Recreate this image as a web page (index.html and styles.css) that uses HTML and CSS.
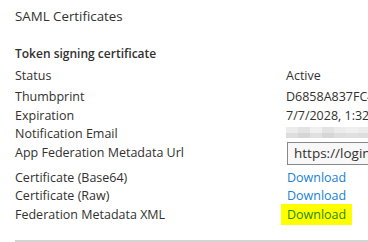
FILE: index.html
```html
<!DOCTYPE html>
<html lang="en">
<head>
    <title>SAML Certificates</title>
    <link rel="stylesheet" href="styles.css">
</head>
<body>
    <section class="panel">
        <h2 class="title">SAML Certificates</h2>
        <h3 class="subtitle">Token signing certificate</h3>
        <div class="props">
            <div class="row first">
                <span class="label">Status</span>
                <span class="value">Active</span>
            </div>
            <div class="row">
                <span class="label">Thumbprint</span>
                <span class="value">D6858A837FC4B21E09A6</span>
            </div>
            <div class="row">
                <span class="label">Expiration</span>
                <span class="value">7/7/2028, 1:32:10 PM</span>
            </div>
            <div class="row">
                <span class="label">Notification Email</span>
                <span class="value"><span class="blur"><i></i><i></i><i></i><i></i><i></i><i></i><i></i></span></span>
            </div>
            <div class="row url-row">
                <span class="label">App Federation Metadata Url</span>
                <span class="value"><span class="url-box">https://login.microsoftonline.com</span></span>
            </div>
            <div class="row">
                <span class="label">Certificate (Base64)</span>
                <span class="value"><a href="#" class="link">Download</a></span>
            </div>
            <div class="row">
                <span class="label">Certificate (Raw)</span>
                <span class="value"><a href="#" class="link">Download</a></span>
            </div>
            <div class="row">
                <span class="label">Federation Metadata XML</span>
                <span class="value"><a href="#" class="link marked">Download</a></span>
            </div>
        </div>
        <hr class="divider">
    </section>
</body>
</html>
```

FILE: styles.css
```css
body, html {
    margin: 0;
    padding: 0;
    width: 368px;
    height: 242px;
    overflow: hidden;
    background: #fff;
}
.panel {
    padding: 7px 0 0 15px;
    font-family: "Open Sans", "Noto Sans", sans-serif;
    font-size: 12.5px;
    color: #323130;
}
.title {
    margin: 0;
    font-size: 13.3px;
    font-weight: 400;
    line-height: 18px;
}
.subtitle {
    margin: 20px 0 0 0;
    font-size: 12px;
    font-weight: 600;
    line-height: 18px;
}
.props {
    display: flex;
    flex-direction: column;
    margin-top: 3px;
}
.row {
    display: flex;
    align-items: center;
    height: 18.5px;
    white-space: nowrap;
}
.row.first {
    margin-bottom: 3px;
}
.label {
    width: 271px;
    flex-shrink: 0;
}
.value {
    flex-shrink: 0;
}
.blur {
    display: flex;
    height: 11px;
    margin-top: -2px;
}
.blur i {
    display: block;
    width: 12px;
    height: 11px;
    background: linear-gradient(#ececec 50%, #dedede 50%);
}
.blur i:nth-child(2n) {
    background: linear-gradient(#e3e3e3 50%, #d6d6d6 50%);
}
.blur i:nth-child(3n) {
    background: linear-gradient(#f0f0f0 50%, #e0e0e0 50%);
}
.url-row {
    margin-bottom: 6.5px;
}
.url-box {
    display: block;
    width: 200px;
    height: 21px;
    margin: 2px 0 0 1px;
    padding: 0 6px;
    line-height: 21px;
    border: 1px solid #8a8886;
    background: #f8f8f8;
    font-size: 13.5px;
}
.link {
    color: #1a7fd4;
    text-decoration: none;
    margin-left: 1px;
}
.marked {
    background: #ffff00;
    color: #2a8a00;
    padding: 2px 6px 2px 6px;
    margin-left: -5px;
}
.divider {
    margin: 16px 0 0 0;
    border: none;
    border-top: 2px solid #d4d4d4;
}
```
